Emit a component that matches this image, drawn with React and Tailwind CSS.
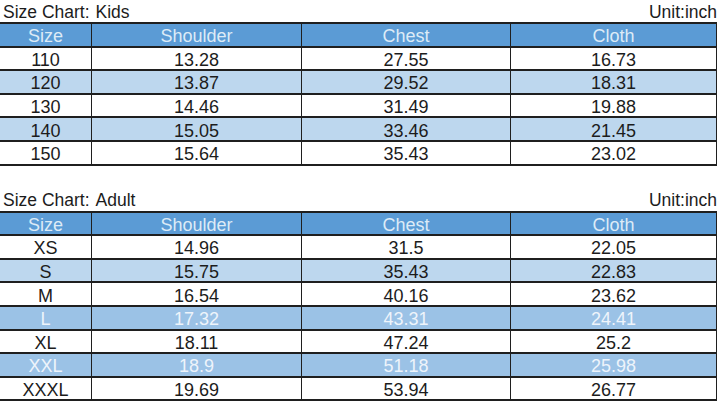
import React from 'react';

const kids = [
  ['110', '13.28', '27.55', '16.73', 'plain'],
  ['120', '13.87', '29.52', '18.31', 'light'],
  ['130', '14.46', '31.49', '19.88', 'plain'],
  ['140', '15.05', '33.46', '21.45', 'light'],
  ['150', '15.64', '35.43', '23.02', 'plain'],
];

const adult = [
  ['XS', '14.96', '31.5', '22.05', 'plain'],
  ['S', '15.75', '35.43', '22.83', 'light'],
  ['M', '16.54', '40.16', '23.62', 'plain'],
  ['L', '17.32', '43.31', '24.41', 'dark'],
  ['XL', '18.11', '47.24', '25.2', 'plain'],
  ['XXL', '18.9', '51.18', '25.98', 'dark'],
  ['XXXL', '19.69', '53.94', '26.77', 'plain'],
];

const rowStyles = {
  head: 'bg-[#5b9bd5] text-[#ddebf7]',
  plain: 'bg-white text-[#1c1c1c]',
  light: 'bg-[#bdd7ee] text-[#1c1c1c]',
  dark: 'bg-[#9bc2e6] text-[#eef4fb]',
};

const Row = ({ cells, kind }) => (
  <div
    className={`grid grid-cols-[92px_210px_209px_206px] h-[23.6px] border-b-2 border-[#1f1f1f] ${rowStyles[kind]}`}
  >
    {cells.map((c, i) => (
      <div
        key={i}
        className="flex items-center justify-center pt-[3px] border-r border-[#1f1f1f] leading-none"
      >
        {c}
      </div>
    ))}
  </div>
);

const Chart = ({ title, rows }) => (
  <div>
    <div className="flex justify-between items-end h-[22px] pb-[1px] px-[3px] w-[720px] leading-none text-[17.5px]">
      <span>
        Size Chart:<span className="ml-[6px]">{title}</span>
      </span>
      <span>Unit:inch</span>
    </div>
    <div className="w-[717px] border-t-2 border-[#1f1f1f]">
      <Row cells={['Size', 'Shoulder', 'Chest', 'Cloth']} kind="head" />
      {rows.map((r) => (
        <Row key={r[0]} cells={r.slice(0, 4)} kind={r[4]} />
      ))}
    </div>
  </div>
);

export default function App() {
  return (
    <div
      className="w-[720px] h-[403px] bg-white overflow-hidden text-[18px] text-[#1c1c1c]"
      style={{ fontFamily: '"Liberation Sans", Arial, sans-serif' }}
    >
      <Chart title="Kids" rows={kids} />
      <div className="h-[23px]" />
      <Chart title="Adult" rows={adult} />
    </div>
  );
}
